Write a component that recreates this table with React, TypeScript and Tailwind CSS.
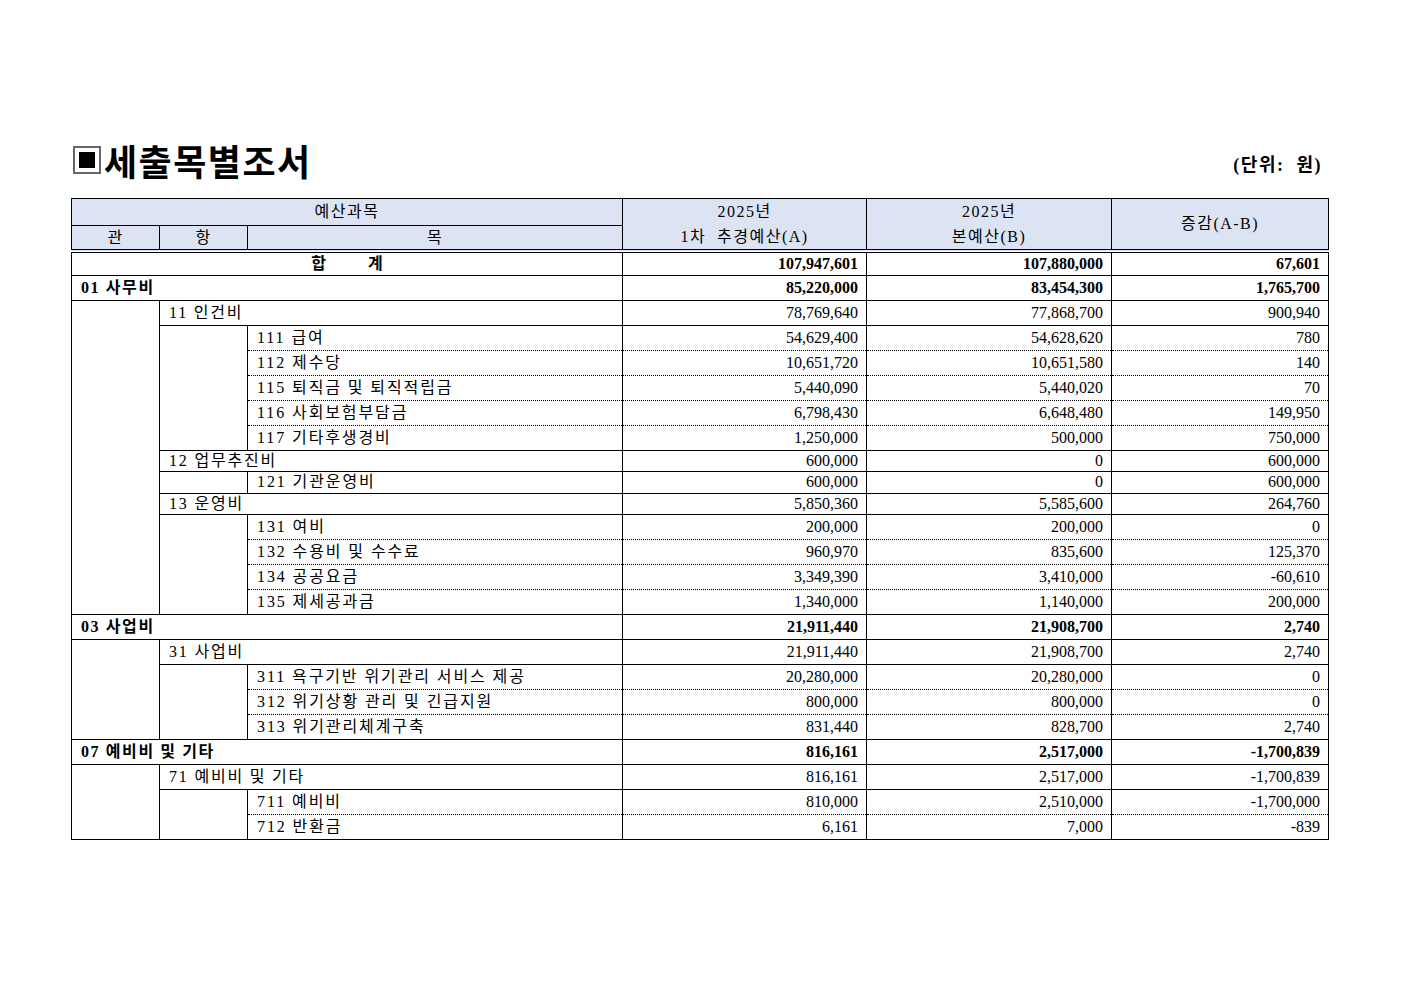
type Row = {
  k: "gwan" | "hang" | "mok";
  label: string;
  a: string;
  b: string;
  c: string;
  gwanSpan?: number;
  hangSpan?: number;
  dotted?: boolean;
  h?: string;
};

const rows: Row[] = [
  { k: "gwan", label: "01 사무비", a: "85,220,000", b: "83,454,300", c: "1,765,700" },
  { k: "hang", label: "11 인건비", a: "78,769,640", b: "77,868,700", c: "900,940", gwanSpan: 13 },
  { k: "mok", label: "111 급여", a: "54,629,400", b: "54,628,620", c: "780", hangSpan: 5 },
  { k: "mok", label: "112 제수당", a: "10,651,720", b: "10,651,580", c: "140", dotted: true },
  { k: "mok", label: "115 퇴직금 및 퇴직적립금", a: "5,440,090", b: "5,440,020", c: "70", dotted: true },
  { k: "mok", label: "116 사회보험부담금", a: "6,798,430", b: "6,648,480", c: "149,950", dotted: true },
  { k: "mok", label: "117 기타후생경비", a: "1,250,000", b: "500,000", c: "750,000", dotted: true },
  { k: "hang", label: "12 업무추진비", a: "600,000", b: "0", c: "600,000", h: "h-[21px]" },
  { k: "mok", label: "121 기관운영비", a: "600,000", b: "0", c: "600,000", hangSpan: 1, h: "h-[22px]" },
  { k: "hang", label: "13 운영비", a: "5,850,360", b: "5,585,600", c: "264,760", h: "h-[21px]" },
  { k: "mok", label: "131 여비", a: "200,000", b: "200,000", c: "0", hangSpan: 4 },
  { k: "mok", label: "132 수용비 및 수수료", a: "960,970", b: "835,600", c: "125,370", dotted: true },
  { k: "mok", label: "134 공공요금", a: "3,349,390", b: "3,410,000", c: "-60,610", dotted: true },
  { k: "mok", label: "135 제세공과금", a: "1,340,000", b: "1,140,000", c: "200,000", dotted: true },
  { k: "gwan", label: "03 사업비", a: "21,911,440", b: "21,908,700", c: "2,740" },
  { k: "hang", label: "31 사업비", a: "21,911,440", b: "21,908,700", c: "2,740", gwanSpan: 4 },
  { k: "mok", label: "311 욕구기반 위기관리 서비스 제공", a: "20,280,000", b: "20,280,000", c: "0", hangSpan: 3 },
  { k: "mok", label: "312 위기상황 관리 및 긴급지원", a: "800,000", b: "800,000", c: "0", dotted: true },
  { k: "mok", label: "313 위기관리체계구축", a: "831,440", b: "828,700", c: "2,740", dotted: true },
  { k: "gwan", label: "07 예비비 및 기타", a: "816,161", b: "2,517,000", c: "-1,700,839" },
  { k: "hang", label: "71 예비비 및 기타", a: "816,161", b: "2,517,000", c: "-1,700,839", gwanSpan: 3 },
  { k: "mok", label: "711 예비비", a: "810,000", b: "2,510,000", c: "-1,700,000", hangSpan: 2 },
  { k: "mok", label: "712 반환금", a: "6,161", b: "7,000", c: "-839", dotted: true },
];

const font = "font-['Liberation_Serif','Noto_Sans_CJK_KR',serif]";
const head = "border border-black bg-[#dce4f4] text-center font-normal p-0 tracking-[1.5px]";

function DataRow({ r }: { r: Row }) {
  const bold = r.k === "gwan" ? "font-bold" : "";
  const top = r.dotted ? "border-t [border-top-style:dotted]" : "border-t";
  const h = r.h ?? "h-[25px]";
  const num = `border-l border-black ${top} p-0 pr-2 text-right ${bold} ${h}`;
  return (
    <tr>
      {r.k === "gwan" && (
        <td colSpan={3} className={`border-l border-t border-black p-0 pl-[9px] tracking-[1.6px] ${bold} ${h}`}>
          {r.label}
        </td>
      )}
      {r.gwanSpan && <td rowSpan={r.gwanSpan} className="border-l border-t border-black p-0" />}
      {r.k === "hang" && (
        <td colSpan={2} className={`border-l border-t border-black p-0 pl-[9px] tracking-[1.8px] ${h}`}>
          {r.label}
        </td>
      )}
      {r.hangSpan && <td rowSpan={r.hangSpan} className="border-l border-t border-black p-0" />}
      {r.k === "mok" && (
        <td className={`border-l border-black ${top} p-0 pl-[9px] tracking-[1.9px] ${h}`}>{r.label}</td>
      )}
      <td className={num}>{r.a}</td>
      <td className={num}>{r.b}</td>
      <td className={num}>{r.c}</td>
    </tr>
  );
}

export default function App() {
  return (
    <div className={`min-h-[992px] w-full bg-white text-black ${font}`}>
      <div className="ml-[71px] w-[1257px] pt-[142px]">
        <div className="flex items-end justify-between pb-[20px]">
          <h1 className="flex items-center gap-[3px] font-['Noto_Sans_CJK_KR',sans-serif] text-[36px] font-bold leading-[36px] tracking-[1.5px]">
            <span className="ml-[2px] flex h-[28px] w-[28px] items-center justify-center border-2 border-[#666] bg-white">
              <span className="h-[16px] w-[16px] bg-black" />
            </span>
            세출목별조서
          </h1>
          <div className="pr-[6px] text-[18px] font-semibold leading-[26px] tracking-[1.5px]">(단위:&nbsp; 원)</div>
        </div>

        <table className="w-[1257px] table-fixed border-collapse border border-black text-[16px] leading-none">
          <colgroup>
            <col className="w-[88px]" />
            <col className="w-[88px]" />
            <col className="w-[375px]" />
            <col className="w-[244px]" />
            <col className="w-[245px]" />
            <col className="w-[217px]" />
          </colgroup>
          <thead>
            <tr>
              <th colSpan={3} className={`${head} h-[26px]`}>
                예산과목
              </th>
              <th rowSpan={2} className={`${head} border-b-4 border-b-black [border-bottom-style:double]`}>
                <div className="leading-[25px]">2025년</div>
                <div className="leading-[25px]">1차&nbsp; 추경예산(A)</div>
              </th>
              <th rowSpan={2} className={`${head} border-b-4 border-b-black [border-bottom-style:double]`}>
                <div className="leading-[25px]">2025년</div>
                <div className="leading-[25px]">본예산(B)</div>
              </th>
              <th rowSpan={2} className={`${head} border-b-4 border-b-black [border-bottom-style:double]`}>
                증감(A-B)
              </th>
            </tr>
            <tr>
              {["관", "항", "목"].map((t) => (
                <th key={t} className={`${head} h-[24px] border-b-4 [border-bottom-style:double]`}>
                  {t}
                </th>
              ))}
            </tr>
          </thead>
          <tbody>
            <tr>
              <td colSpan={3} className="h-[24px] border-l border-t border-black p-0 text-center font-bold">
                <span className="inline-flex gap-[42px]">
                  <span>합</span>
                  <span>계</span>
                </span>
              </td>
              <td className="border-l border-t border-black p-0 pr-2 text-right font-bold">107,947,601</td>
              <td className="border-l border-t border-black p-0 pr-2 text-right font-bold">107,880,000</td>
              <td className="border-l border-t border-black p-0 pr-2 text-right font-bold">67,601</td>
            </tr>
            {rows.map((r) => (
              <DataRow key={r.label + r.k} r={r} />
            ))}
          </tbody>
        </table>
      </div>
    </div>
  );
}
